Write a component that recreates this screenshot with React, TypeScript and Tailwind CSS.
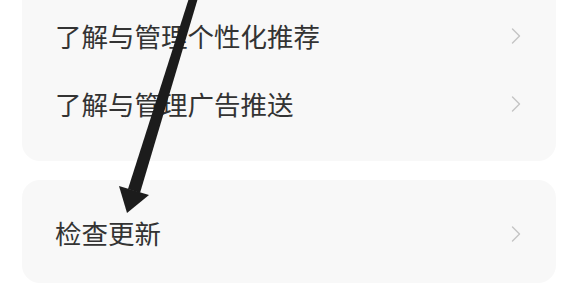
import { ChevronRight } from 'lucide-react';

const font = { fontFamily: '"Noto Sans CJK SC", "Noto Sans", sans-serif' };

function Row({ label }: { label: string }) {
  return (
    <div className="flex h-[68px] items-center justify-between pl-[33px] pr-[26px]">
      <span className="text-[26.5px] leading-none text-[#333333]">{label}</span>
      <ChevronRight className="h-[28px] w-[28px] text-[#c4c4c4]" strokeWidth={1.2} />
    </div>
  );
}

export default function App() {
  return (
    <div className="relative h-[298px] w-[576px] overflow-hidden bg-white" style={font}>
      <div className="flex flex-col gap-[19px] pl-[22px] pr-[20px]">
        <div className="flex h-[161px] flex-col justify-end rounded-b-[18px] bg-[#f8f8f8] pb-[23px]">
          <Row label="了解与管理个性化推荐" />
          <Row label="了解与管理广告推送" />
        </div>
        <div className="flex h-[103px] flex-col justify-center rounded-[18px] bg-[#f8f8f8] pt-[4px]">
          <Row label="检查更新" />
        </div>
      </div>

      {/* hand-drawn annotation arrow */}
      <svg className="pointer-events-none absolute left-0 top-0" width="576" height="298" viewBox="0 0 576 298">
        <polygon points="189,-2 198,-2 140,193 128,189" fill="#1c1c1c" />
        <polygon points="127,213 119,186 149,195" fill="#1c1c1c" />
      </svg>
    </div>
  );
}
